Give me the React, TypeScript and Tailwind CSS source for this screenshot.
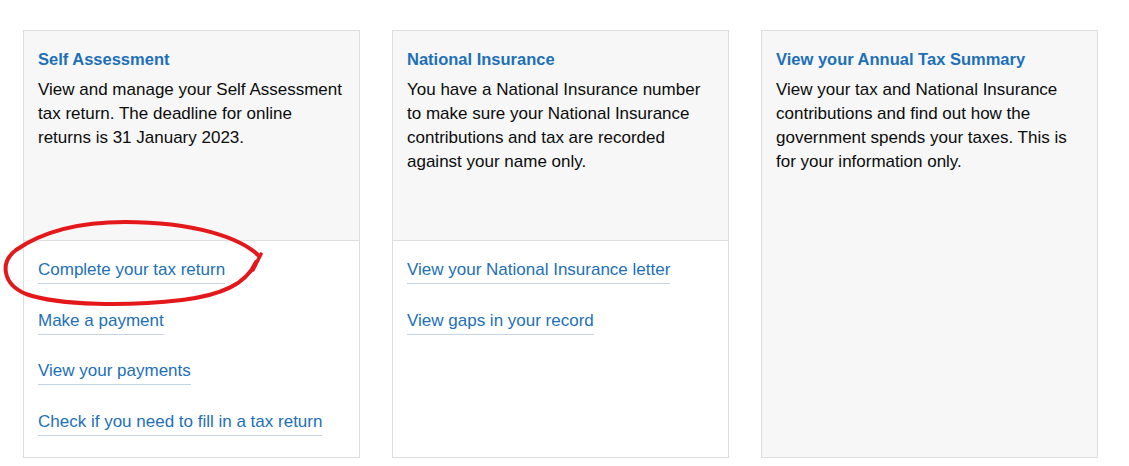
import React from "react";

type Card = {
  title: string;
  text: string;
  links: string[];
};

const cards: Card[] = [
  {
    title: "Self Assessment",
    text: "View and manage your Self Assessment tax return. The deadline for online returns is 31 January 2023.",
    links: [
      "Complete your tax return",
      "Make a payment",
      "View your payments",
      "Check if you need to fill in a tax return",
    ],
  },
  {
    title: "National Insurance",
    text: "You have a National Insurance number to make sure your National Insurance contributions and tax are recorded against your name only.",
    links: ["View your National Insurance letter", "View gaps in your record"],
  },
  {
    title: "View your Annual Tax Summary",
    text: "View your tax and National Insurance contributions and find out how the government spends your taxes. This is for your information only.",
    links: [],
  },
];

function CardBox({ card }: { card: Card }) {
  const hasLinks = card.links.length > 0;
  return (
    <div className="flex h-[428px] w-[337px] flex-col border border-[#dedede] bg-white">
      <div
        className={
          hasLinks
            ? "h-[210px] border-b border-[#dedede] bg-[#f7f7f7] pl-[14px] pr-[10px] pt-[16px]"
            : "flex-1 bg-[#f7f7f7] pl-[14px] pr-[10px] pt-[16px]"
        }
      >
        <h2 className="text-[16.5px] font-bold leading-6 text-[#1d70b8]">{card.title}</h2>
        <p className="mt-[7px] text-[17px] leading-6 text-[#0b0c0c]">{card.text}</p>
      </div>
      {hasLinks && (
        <ul className="flex flex-col gap-[24.5px] pl-[14px] pt-[17px]">
          {card.links.map((l) => (
            <li key={l}>
              <a
                href="#"
                className="inline-block border-b border-[#c5d3e3] pb-[1px] text-[17px] leading-6 text-[#1d70b8]"
              >
                {l}
              </a>
            </li>
          ))}
        </ul>
      )}
    </div>
  );
}

export default function App() {
  return (
    <div
      className="relative h-[466px] w-[1129px] overflow-hidden bg-white"
      style={{ fontFamily: '"Liberation Sans", Arial, sans-serif' }}
    >
      <div className="flex gap-[32px] pl-[23px] pt-[30px]">
        {cards.map((c) => (
          <CardBox key={c.title} card={c} />
        ))}
      </div>
      {/* hand-drawn red circle annotation */}
      <svg className="pointer-events-none absolute left-0 top-0" width="1129" height="466">
        <path
          d="M 258 255 C 240 238, 195 222, 125 222 C 80 222, 42 232, 16 250 C 0 262, 2 284, 26 294 C 60 306, 130 306, 182 300 C 222 295, 246 284, 256 262"
          fill="none"
          stroke="#e4181b"
          strokeWidth="4"
          strokeLinecap="round"
        />
        <path d="M 261 254 L 253 270" fill="none" stroke="#e4181b" strokeWidth="3.5" strokeLinecap="round" />
      </svg>
    </div>
  );
}
